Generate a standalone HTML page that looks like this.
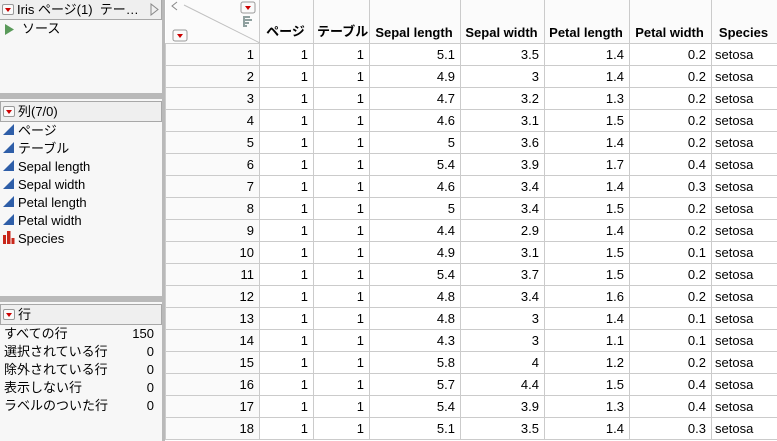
<!DOCTYPE html>
<html><head><meta charset="utf-8"><style>
*{margin:0;padding:0;box-sizing:border-box}
body{width:777px;height:441px;overflow:hidden;background:#fff;font-family:"Liberation Sans","Noto Sans CJK JP",sans-serif;font-size:13px;color:#000;position:relative}
.lp{position:absolute;left:0;top:0;width:162px;height:441px;background:#f7f7f7}
.vbar{position:absolute;left:162px;top:0;width:3px;height:441px;background:#b9b9b9}
.hsep{position:absolute;left:0;width:162px;height:6px;background:#b9b9b9}
.hdr{position:absolute;left:0;width:162px;height:21px;background:#efefef;border:1px solid #a8a8a8;line-height:19px;padding-left:17px}
.dd{position:absolute;width:12px;height:11px;border:1px solid #999;border-radius:2px;background:#fafafa}
.dd:after{content:"";position:absolute;left:2px;top:3px;border-left:3px solid transparent;border-right:3px solid transparent;border-top:4px solid #c00}
.hdr .dd{left:2px;top:4px}
.it{position:absolute;left:18px;line-height:18px}
.rw{position:absolute;left:4px;width:154px;line-height:18px}
.rw span{position:absolute;right:4px}
table{position:absolute;left:165px;top:0;width:612px;border-collapse:collapse;table-layout:fixed}
td,th{border:1px solid #cbcbcb;height:22px;padding:0 5px 0 3px;text-align:right;white-space:nowrap;font-weight:normal}
th{height:43px;vertical-align:bottom;padding-bottom:3px;font-weight:bold;text-align:center;background:#fbfbfb;border-top:none}
td.s{text-align:left}
td.n{background:#fafafa}
</style></head><body>
<div class="lp">
 <div class="hdr" style="top:0;height:20px;border-top:none;border-left:none">Iris ページ(1)&nbsp; テー…<div class="dd"></div>
  <svg style="position:absolute;left:150px;top:3px" width="9" height="13"><path d="M1 1 L8 6.5 L1 12 Z" fill="none" stroke="#888"/></svg></div>
 <svg style="position:absolute;left:4px;top:24px" width="11" height="11"><path d="M1 0 L10 5.5 L1 11 Z" fill="#5a9a5a"/></svg>
 <div class="it" style="top:20px;left:22px">ソース</div>
 <div class="hsep" style="top:93px"></div>
 <div class="hdr" style="top:101px">列(7/0)<div class="dd"></div></div>
 <svg style="position:absolute;left:2px;top:123px" width="14" height="124">
  <path d="M1 12 L12 1 L12 12 Z" fill="#2e5ea8"/>
  <path d="M1 30 L12 19 L12 30 Z" fill="#2e5ea8"/>
  <path d="M1 48 L12 37 L12 48 Z" fill="#2e5ea8"/>
  <path d="M1 66 L12 55 L12 66 Z" fill="#2e5ea8"/>
  <path d="M1 84 L12 73 L12 84 Z" fill="#2e5ea8"/>
  <path d="M1 102 L12 91 L12 102 Z" fill="#2e5ea8"/>
  <rect x="1" y="112" width="3" height="9" fill="#c8261a"/><rect x="5" y="108" width="3.5" height="13" fill="#c8261a"/><rect x="9.5" y="115" width="3" height="6" fill="#c8261a"/>
 </svg>
 <div class="it" style="top:122px">ページ</div>
 <div class="it" style="top:140px">テーブル</div>
 <div class="it" style="top:158px">Sepal length</div>
 <div class="it" style="top:176px">Sepal width</div>
 <div class="it" style="top:194px">Petal length</div>
 <div class="it" style="top:212px">Petal width</div>
 <div class="it" style="top:230px">Species</div>
 <div class="hsep" style="top:296px"></div>
 <div class="hdr" style="top:304px">行<div class="dd"></div></div>
 <div class="rw" style="top:325px">すべての行<span>150</span></div>
 <div class="rw" style="top:343px">選択されている行<span>0</span></div>
 <div class="rw" style="top:361px">除外されている行<span>0</span></div>
 <div class="rw" style="top:379px">表示しない行<span>0</span></div>
 <div class="rw" style="top:397px">ラベルのついた行<span>0</span></div>
</div>
<div class="vbar"></div>
<table>
<colgroup><col style="width:94px"><col style="width:54px"><col style="width:56px"><col style="width:91px"><col style="width:84px"><col style="width:85px"><col style="width:82px"><col style="width:66px"></colgroup>
<tr><th style="position:relative;border-left:none"><svg style="position:absolute;left:0;top:0" width="94" height="44"><line x1="18" y1="5" x2="94" y2="43" stroke="#c0c0c0"/><path d="M11 2 L6 6 L11 10" fill="none" stroke="#888"/><rect x="75" y="2" width="14" height="11" rx="2" fill="#fafafa" stroke="#999"/><path d="M79 6 L85 6 L82 10 Z" fill="#c00"/><rect x="7" y="30" width="14" height="11" rx="2" fill="#fafafa" stroke="#999"/><path d="M11 34 L17 34 L14 38 Z" fill="#c00"/><path d="M78 16 V27 M78 17 H84 M78 20 H86 M78 23 H83 M78 26 H81" stroke="#8fa09f" stroke-width="2"/></svg></th><th>ページ</th><th>テーブル</th><th>Sepal length</th><th>Sepal width</th><th>Petal length</th><th>Petal width</th><th>Species</th></tr>
<tr><td class="n">1</td><td>1</td><td>1</td><td>5.1</td><td>3.5</td><td>1.4</td><td>0.2</td><td class="s">setosa</td></tr>
<tr><td class="n">2</td><td>1</td><td>1</td><td>4.9</td><td>3</td><td>1.4</td><td>0.2</td><td class="s">setosa</td></tr>
<tr><td class="n">3</td><td>1</td><td>1</td><td>4.7</td><td>3.2</td><td>1.3</td><td>0.2</td><td class="s">setosa</td></tr>
<tr><td class="n">4</td><td>1</td><td>1</td><td>4.6</td><td>3.1</td><td>1.5</td><td>0.2</td><td class="s">setosa</td></tr>
<tr><td class="n">5</td><td>1</td><td>1</td><td>5</td><td>3.6</td><td>1.4</td><td>0.2</td><td class="s">setosa</td></tr>
<tr><td class="n">6</td><td>1</td><td>1</td><td>5.4</td><td>3.9</td><td>1.7</td><td>0.4</td><td class="s">setosa</td></tr>
<tr><td class="n">7</td><td>1</td><td>1</td><td>4.6</td><td>3.4</td><td>1.4</td><td>0.3</td><td class="s">setosa</td></tr>
<tr><td class="n">8</td><td>1</td><td>1</td><td>5</td><td>3.4</td><td>1.5</td><td>0.2</td><td class="s">setosa</td></tr>
<tr><td class="n">9</td><td>1</td><td>1</td><td>4.4</td><td>2.9</td><td>1.4</td><td>0.2</td><td class="s">setosa</td></tr>
<tr><td class="n">10</td><td>1</td><td>1</td><td>4.9</td><td>3.1</td><td>1.5</td><td>0.1</td><td class="s">setosa</td></tr>
<tr><td class="n">11</td><td>1</td><td>1</td><td>5.4</td><td>3.7</td><td>1.5</td><td>0.2</td><td class="s">setosa</td></tr>
<tr><td class="n">12</td><td>1</td><td>1</td><td>4.8</td><td>3.4</td><td>1.6</td><td>0.2</td><td class="s">setosa</td></tr>
<tr><td class="n">13</td><td>1</td><td>1</td><td>4.8</td><td>3</td><td>1.4</td><td>0.1</td><td class="s">setosa</td></tr>
<tr><td class="n">14</td><td>1</td><td>1</td><td>4.3</td><td>3</td><td>1.1</td><td>0.1</td><td class="s">setosa</td></tr>
<tr><td class="n">15</td><td>1</td><td>1</td><td>5.8</td><td>4</td><td>1.2</td><td>0.2</td><td class="s">setosa</td></tr>
<tr><td class="n">16</td><td>1</td><td>1</td><td>5.7</td><td>4.4</td><td>1.5</td><td>0.4</td><td class="s">setosa</td></tr>
<tr><td class="n">17</td><td>1</td><td>1</td><td>5.4</td><td>3.9</td><td>1.3</td><td>0.4</td><td class="s">setosa</td></tr>
<tr><td class="n">18</td><td>1</td><td>1</td><td>5.1</td><td>3.5</td><td>1.4</td><td>0.3</td><td class="s">setosa</td></tr>
</table>
</body></html>
